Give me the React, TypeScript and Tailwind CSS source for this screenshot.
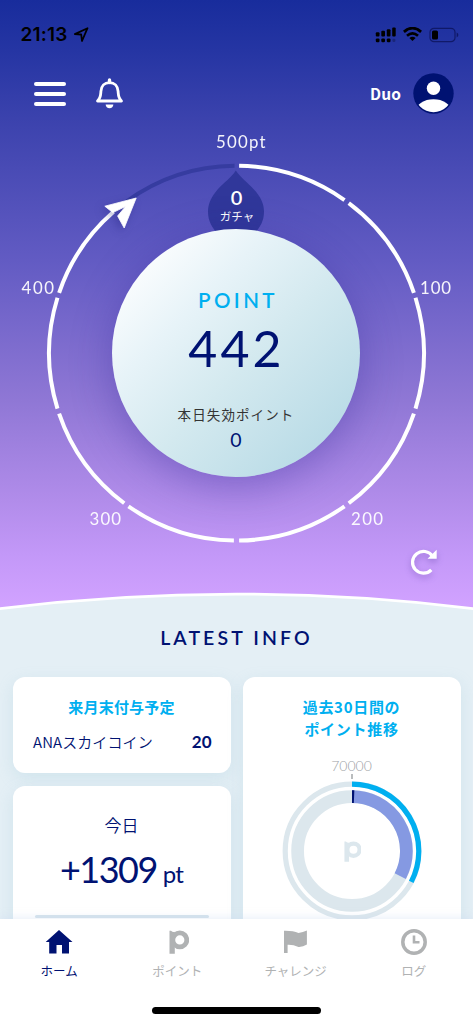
import type { ReactNode } from "react";

const CX = 236.5;
const CY = 353.2;
const R = 187.4;

const JP = "font-['Noto_Sans_CJK_JP','Noto_Sans',sans-serif]";
const LATIN = "font-['Lato','Noto_Sans_CJK_JP',sans-serif]";

function arc(cx: number, cy: number, r: number, from: number, to: number) {
  const point = (deg: number) => {
    const a = (deg * Math.PI) / 180;
    return `${(cx + r * Math.sin(a)).toFixed(2)} ${(cy - r * Math.cos(a)).toFixed(2)}`;
  };
  return `M${point(from)} A${r} ${r} 0 ${to - from > 180 ? 1 : 0} 1 ${point(to)}`;
}

function StatusBar() {
  return (
    <div className="flex h-[69px] items-center justify-between pr-[14px] pl-[20.5px] text-black">
      <div className="flex items-center gap-[5px]">
        <span className="w-[48px] font-['Inter',sans-serif] text-[19px] leading-none font-semibold tracking-[0.2px]">
          21:13
        </span>
        <svg width="15" height="16" viewBox="0 0 15 16" fill="none" stroke="currentColor" strokeWidth="1.8" strokeLinejoin="round">
          <path d="M0.8 7.1 L13.5 1.2 L8 14 L7.2 7.5 Z" />
        </svg>
      </div>
      <div className="flex items-center gap-[7px]">
        <svg width="22" height="16" viewBox="0 0 22 16" fill="currentColor">
          <rect x="1.8" y="5.2" width="3.7" height="4.3" rx="1" />
          <rect x="7.3" y="3.8" width="3.7" height="5.7" rx="1" />
          <rect x="12.8" y="2.2" width="3.7" height="7.3" rx="1" />
          <rect x="18.2" y="0.6" width="3.5" height="8.9" rx="1" />
          <rect x="1.8" y="11.4" width="3.7" height="3.8" rx="1.2" />
          <rect x="7.3" y="11.4" width="3.7" height="3.8" rx="1.2" />
          <rect x="12.8" y="11.4" width="3.7" height="3.8" rx="1.2" />
          <rect x="18.4" y="11.8" width="3" height="3.2" rx="1.2" opacity="0.25" />
        </svg>
        <svg width="19" height="15" viewBox="0 0 19 15">
          <path d="M0.9 4.9 Q9.5 -2.6 18.1 4.9" fill="none" stroke="currentColor" strokeWidth="2.8" />
          <path d="M4 8.7 Q9.5 3.9 15 8.7" fill="none" stroke="currentColor" strokeWidth="2.7" />
          <path d="M9.5 14 L6.4 10.9 Q9.5 8.4 12.6 10.9 Z" fill="currentColor" />
        </svg>
        <svg width="30" height="16" viewBox="0 0 30 16">
          <rect x="1" y="1.3" width="25" height="13.4" rx="4" fill="none" stroke="#080d4c" strokeOpacity="0.65" strokeWidth="1.2" />
          <rect x="3" y="3.4" width="6" height="9.2" rx="1.6" />
          <path d="M27.7 5.6 Q29.4 6.6 29.4 8 Q29.4 9.4 27.7 10.4 Z" fill="#080d4c" fillOpacity="0.7" />
        </svg>
      </div>
    </div>
  );
}

function Header() {
  return (
    <header className="flex h-[49px] items-center pr-[18px] pl-[34px]">
      <button className="flex w-[32px] flex-col gap-[6px]" aria-label="menu">
        <span className="h-1 rounded-full bg-white" />
        <span className="h-1 rounded-full bg-white" />
        <span className="h-1 rounded-full bg-white" />
      </button>
      <svg className="ml-[29px]" width="29" height="32" viewBox="0 0 29 32" fill="none">
        <path
          d="M2.5 23 C5.8 20 5.6 17.6 5.9 13.4 C6.2 8 9.5 4.6 14.5 4.6 C19.5 4.6 22.8 8 23.1 13.4 C23.4 17.6 23.2 20 26.5 23 Z"
          stroke="white" strokeWidth="2.8" strokeLinejoin="round"
        />
        <path d="M14.5 2 V4.5" stroke="white" strokeWidth="3.4" strokeLinecap="round" />
        <path d="M10.6 26.6 H18.4 C18.2 29 16.7 30.2 14.5 30.2 S10.8 29 10.6 26.6 Z" fill="white" />
      </svg>
      <span className={`ml-auto text-[15.5px] leading-none font-bold tracking-[0.1px] text-white ${JP}`}>Duo</span>
      <svg className="ml-[11px]" width="43" height="42" viewBox="0 0 43 42">
        <defs>
          <clipPath id="avatar">
            <circle cx="21.5" cy="20.5" r="18.7" />
          </clipPath>
        </defs>
        <circle cx="21.5" cy="20.5" r="20.2" fill="#001272" />
        <circle cx="21.5" cy="15.2" r="6.7" fill="white" />
        <ellipse cx="21.5" cy="38" rx="17.5" ry="11.8" fill="white" clipPath="url(#avatar)" />
      </svg>
    </header>
  );
}

const segments: [number, number][] = [0, 36, 72, 108, 144, 180, 216, 252].map((a) => [a + 0.8, a + 35.2]);

const marks = [
  { x: 216, y: 148, w: 49.5, t: "500pt" },
  { x: 420, y: 294, w: 31, t: "100" },
  { x: 351, y: 525, w: 32, t: "200" },
  { x: 89.5, y: 525, w: 31.5, t: "300" },
  { x: 21.5, y: 294, w: 32.5, t: "400" },
];

function Gauge() {
  return (
    <div className="grid">
      <svg className="col-start-1 row-start-1" width="473" height="492" viewBox="0 118 473 492">
        <g fill="none" stroke="white" strokeWidth="4">
          {segments.map(([a, b]) => (
            <path key={a} d={arc(CX, CY, R, a, b)} />
          ))}
          <path d={arc(CX, CY, R, 288.8, 319)} />
          <path d={arc(CX, CY, R, 324, 359.4)} stroke="#363ca0" />
        </g>
        <path
          d="M235.8 170.5 C241 178 247 182 253.5 189 C260 196 264 203 264 211.5 C264 221 260 228 253 235 H219 C212 228 208 221 208 211.5 C208 203 212 196 218 189 C224.5 182 231 178 235.8 170.5 Z"
          fill="#30379a"
        />
        <path
          className="[filter:drop-shadow(-3px_3px_4px_rgba(30,30,120,0.35))]"
          d="M136.2 198 L104.800 206.200 L112.800 212.600 L125.500 206.500 L117.600 216 L124.200 228 Z"
          fill="white" stroke="white" strokeWidth="0.8" strokeLinejoin="round"
        />
        <g fill="white" className={LATIN} fontSize="16.8" opacity="0.94">
          {marks.map((m) => (
            <text key={m.t} x={m.x} y={m.y} textLength={m.w}>
              {m.t}
            </text>
          ))}
        </g>
        <g fill="white" textAnchor="middle">
          <text x="236.5" y="204.5" className={LATIN} fontSize="20" fontWeight="600">0</text>
          <text x="237" y="220.5" className={JP} fontSize="11.5">ガチャ</text>
        </g>
        <g className="[filter:drop-shadow(0_3px_3px_rgba(90,60,160,0.4))]">
          <path d="M432.5 556.2 A10.9 10.9 0 1 0 431.3 569.800" fill="none" stroke="white" strokeWidth="3.2" />
          <path d="M436.7 549.800 V558.800 H427.500 Z" fill="white" />
        </g>
        <path d="M-2 608.8 Q236.5 579.4 475 608.8 V612 H-2 Z" fill="#e4eff5" />
        <path d="M-2 608.8 Q236.5 579.4 475 608.8" fill="none" stroke="white" strokeWidth="2.8" />
      </svg>
      <div className="col-start-1 row-start-1 mt-[111px] ml-[112px] flex size-[248px] flex-col items-center rounded-full bg-[linear-gradient(135deg,#ffffff_8%,#e7f3f8_32%,#d3e9ef_55%,#b5d9e5_92%)] shadow-[0_10px_40px_rgba(50,40,150,0.36)]">
        <div className={`mt-[58px] h-[26px] pl-[4px] text-[20.5px] leading-[26px] font-semibold tracking-[3.4px] text-[#00aff0] ${LATIN}`}>
          POINT
        </div>
        <div className={`mt-[7px] h-[56px] pl-[1px] text-[50px] leading-[56px] tracking-[3.2px] text-[#001272] ${LATIN}`}>442</div>
        <div className={`mt-[28px] h-[20px] text-[13.5px] leading-[20px] tracking-[1.1px] whitespace-nowrap text-[#333333] ${JP}`}>
          本日失効ポイント
        </div>
        <div className={`mt-[4px] text-[19.5px] leading-[24px] text-[#001272] ${LATIN}`}>0</div>
      </div>
    </div>
  );
}

function Card({ className, children }: { className: string; children: ReactNode }) {
  return (
    <section className={`flex flex-col items-center rounded-[12px] bg-white shadow-[0_5px_16px_rgba(140,190,210,0.22)] ${className}`}>
      {children}
    </section>
  );
}

function LogoP({ size }: { size: number }) {
  return (
    <svg width={size} height={size * 1.2} viewBox="0 0 20 24">
      <circle cx="10.8" cy="9.9" r="7" fill="none" stroke="currentColor" strokeWidth="4.8" />
      <path d="M0.5 0.7 H2 Q4 2.5 5.8 1.7 V23.8 H0.5 Z" fill="currentColor" />
    </svg>
  );
}

function Trend() {
  return (
    <div className="mt-[2.5px] ml-[1px] grid place-items-center text-[#dce7ed]">
      <svg className="col-start-1 row-start-1" width="140" height="140" viewBox="0 0 140 140" fill="none">
        <circle cx="70" cy="70" r="66.8" stroke="#dce7ed" strokeWidth="5.2" />
        <path d={arc(70, 70, 66.8, 0, 117.5)} stroke="#00aff0" strokeWidth="5.2" />
        <circle cx="70" cy="70" r="54.4" stroke="#dce7ed" strokeWidth="12.7" />
        <path d={arc(70, 70, 54.4, 0, 117.5)} stroke="#8599e2" strokeWidth="12.7" />
        <path d={arc(70, 70, 54.4, 0, 2.2)} stroke="#001272" strokeWidth="12.7" />
      </svg>
      <div className="col-start-1 row-start-1 pl-[1px]">
        <LogoP size={17.5} />
      </div>
    </div>
  );
}

const tabs = [
  {
    label: "ホーム",
    color: "text-[#001272]",
    icon: (
      <svg width="28" height="26" viewBox="0 0 28 26" fill="currentColor">
        <path d="M14 1 L27.5 13 H24 V24.5 H17 V16 H11.5 V24.5 H4.2 V13 H0.7 Z" />
      </svg>
    ),
  },
  { label: "ポイント", color: "text-[#b0b2b3]", icon: <span className="ml-[3px]"><LogoP size={20} /></span> },
  {
    label: "チャレンジ",
    color: "text-[#b0b2b3]",
    icon: (
      <svg width="25" height="26" viewBox="0 0 25 26" fill="currentColor">
        <path d="M1 1.8 Q10 1.6 15.5 3.9 Q20 3.5 23.9 1.6 V15.6 Q20 18.2 15.5 18 Q10 15.5 4.6 15.8 V24 H1 Z" />
      </svg>
    ),
  },
  {
    label: "ログ",
    color: "text-[#b0b2b3]",
    icon: (
      <svg width="26" height="26" viewBox="0 0 26 26" fill="none" stroke="currentColor">
        <circle cx="13" cy="13" r="11.2" strokeWidth="3.5" />
        <path d="M13 6.5 V13.2 H18.5" strokeWidth="2.6" />
      </svg>
    ),
  },
];

function TabBar() {
  return (
    <nav className="relative h-[105px] shrink-0 bg-white shadow-[0_-2px_8px_rgba(200,215,240,0.35)]">
      <div className="flex">
        {tabs.map((tab) => (
          <div key={tab.label} className={`flex w-[118.25px] flex-col items-center pt-[9px] ${tab.color}`}>
            <div className="flex h-[27px] items-center">{tab.icon}</div>
            <span className={`mt-[7px] text-[12.5px] leading-[18px] whitespace-nowrap ${JP}`}>{tab.label}</span>
          </div>
        ))}
      </div>
      <div className="mx-auto mt-[27px] h-[7px] w-[169px] rounded-full bg-black" />
    </nav>
  );
}

export default function App() {
  return (
    <main className="flex h-[1024px] w-[473px] flex-col overflow-hidden bg-[#e4eff5]">
      <div className="h-[610px] shrink-0 bg-[linear-gradient(180deg,#182c9c_0px,#2535a3_50px,#3b42ad_118px,#625bc3_260px,#8f77d5_400px,#b18cea_500px,#c398f8_555px,#d1a2ff_605px)]">
        <StatusBar />
        <Header />
        <Gauge />
      </div>
      <div className="min-h-0 flex-1 overflow-hidden">
        <h2 className={`mt-[14px] h-[28px] text-center text-[19.5px] leading-[28px] font-semibold tracking-[3.1px] text-[#001272] ${LATIN}`}>
          LATEST INFO
        </h2>
        <div className="mt-[25px] grid grid-cols-[218px_218px] gap-[12px] pl-[12.5px]">
          <div className="flex flex-col gap-[12.5px]">
            <Card className="h-[96px]">
              <h3 className={`mt-[18px] text-[15px] leading-[24px] font-bold tracking-[0.2px] text-[#00aff0] ${JP}`}>来月末付与予定</h3>
              <div className="mt-[11px] flex w-full items-center justify-between pr-[19px] pl-[20.5px] text-[#001272]">
                <span className={`text-[15px] leading-[24px] font-[350] tracking-[0.1px] ${JP}`}>ANAスカイコイン</span>
                <span className={`text-[17px] leading-[24px] font-bold ${LATIN}`}>20</span>
              </div>
            </Card>
            <Card className="h-[200px] text-[#001272]">
              <div className={`mt-[26px] text-[17px] leading-[26px] font-[350] ${JP}`}>今日</div>
              <div className={`mt-[5.5px] flex items-baseline gap-[6px] ${LATIN}`}>
                <span className="text-[36px] leading-[52px] tracking-[-1.5px]">+1309</span>
                <span className="text-[24px] tracking-[-0.8px]">pt</span>
              </div>
              <div className="mt-[19.5px] h-[3px] w-[174px] rounded-full bg-[#d5e3ec]" />
            </Card>
          </div>
          <Card className="h-[340px]">
            <h3 className={`mt-[19px] text-center text-[15px] leading-[22px] font-bold tracking-[0.7px] text-[#00aff0] ${JP}`}>
              過去30日間の
              <br />
              ポイント推移
            </h3>
            <div className={`mt-[16.5px] text-[14px] leading-[18px] font-light text-[#9da2a6] ${LATIN}`}>70000</div>
            <div className="mt-[-1px] ml-[1px] h-[5px] w-[1.5px] bg-[#b9bcbe]" />
            <Trend />
          </Card>
        </div>
      </div>
      <TabBar />
    </main>
  );
}
